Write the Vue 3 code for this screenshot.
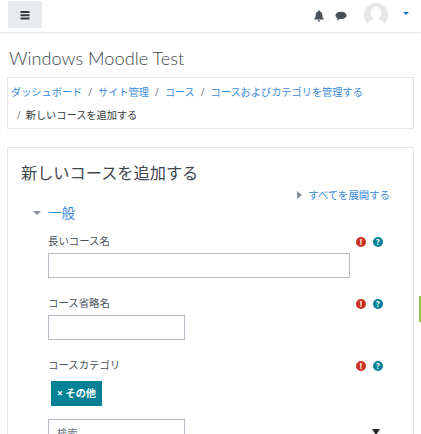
<script setup>
const fields = [
  { label: '長いコース名', size: 'long' },
  { label: 'コース省略名', size: 'short' },
]
const crumbs = ['ダッシュボード', 'サイト管理', 'コース', 'コースおよびカテゴリを管理する']
</script>

<template>
  <div class="page">
    <header class="nav">
      <button class="menu" aria-label="menu">
        <svg width="12" height="10" viewBox="0 0 12 10"><path d="M1.500 1h9v2h-9zM1.500 4.200h9v2h-9zM1.500 7.400h9v2h-9z" fill="#343a40"/></svg>
      </button>
      <div class="nav-right">
        <svg class="bell" width="10" height="12" viewBox="0 0 10 12"><path d="M5 .5c.6 0 1 .4 1 .9 1.500.4 2.300 1.700 2.300 3.300 0 2.300.5 3.200 1.400 4v.8H.3v-.8c.9-.8 1.400-1.700 1.400-4C1.700 3.100 2.500 1.800 4 1.400c0-.5.4-.9 1-.9zM3.700 10.300h2.600c0 .8-.6 1.300-1.300 1.300s-1.300-.5-1.300-1.300z" fill="#495057"/></svg>
        <svg class="chat" width="12" height="10" viewBox="0 0 12 10"><path d="M6 .8c3 0 5.500 1.600 5.500 3.600S9 8 6 8c-.5 0-1 0-1.400-.1C3.700 8.700 2.600 9.300 1.300 9.400c.7-.7 1.200-1.500 1.400-2.200C1.300 6.600.5 5.600.5 4.400.5 2.400 3 .8 6 .8z" fill="#495057"/></svg>
        <svg class="avatar" width="24" height="24" viewBox="0 0 24 24"><defs><clipPath id="c"><circle cx="12" cy="12" r="12"/></clipPath></defs><circle cx="12" cy="12" r="12" fill="#e6e6e6"/><g clip-path="url(#c)" fill="#fff"><ellipse cx="12" cy="10" rx="5.500" ry="6.500"/><path d="M2 26c0-6 4-9 7.500-10h5C18 17 22 20 22 26z"/></g></svg>
        <span class="caret"></span>
      </div>
    </header>

    <main class="content">
      <h1 class="site">Windows Moodle Test</h1>

      <nav class="crumbs">
        <div class="crumb-line">
          <template v-for="(c, i) in crumbs" :key="c">
            <span v-if="i" class="sep">/</span><a class="link">{{ c }}</a>
          </template>
        </div>
        <div class="crumb-line second">
          <span class="sep first">/</span><span class="current">新しいコースを追加する</span>
        </div>
      </nav>

      <section class="card">
        <h2 class="title">新しいコースを追加する</h2>
        <div class="expand"><span class="tri-right"></span><a class="link">すべてを展開する</a></div>
        <div class="legend"><span class="tri-down"></span><a class="link">一般</a></div>

        <div v-for="f in fields" :key="f.label" class="field">
          <div class="label-row">
            <label>{{ f.label }}</label>
            <span class="icons">
              <span class="ic err">!</span>
              <span class="ic help">?</span>
            </span>
          </div>
          <div class="input" :class="f.size"></div>
        </div>

        <div class="field cat">
          <div class="label-row">
            <label>コースカテゴリ</label>
            <span class="icons">
              <span class="ic err">!</span>
              <span class="ic help">?</span>
            </span>
          </div>
          <span class="tag">× その他</span>
          <div class="search-row">
            <div class="input short search">検索</div>
            <span class="select-caret"></span>
          </div>
        </div>
      </section>
    </main>
    <span class="tab"></span>
  </div>
</template>

<style scoped>
.page {
  position: relative;
  width: 421px;
  height: 434px;
  overflow: hidden;
  background: #fff;
  font-family: "Open Sans", "Noto Sans CJK JP", sans-serif;
  font-size: 10.2px;
  color: #495057;
}
.nav {
  height: 32px;
  box-sizing: border-box;
  display: flex;
  justify-content: space-between;
  padding: 1px 0 0 8px;
  box-shadow: 0 1px 2px rgba(0, 0, 0, .12);
}
.menu {
  width: 34px;
  height: 27px;
  border: 0;
  padding: 0;
  background: #e9ecef;
  display: flex;
  align-items: center;
  justify-content: center;
}
.nav-right {
  display: flex;
  align-items: flex-start;
}
.bell { margin-top: 9px; }
.chat { margin: 10px 0 0 11px; }
.avatar { margin: 2px 0 0 17px; }
.caret {
  margin: 11px 12px 0 15px;
  border: 3px solid transparent;
  border-top: 3px solid #1177d1;
  border-bottom: 0;
}
.content { padding: 0 7px; }
.site {
  margin: 13px 0 0 2px;
  font-family: "Lato", "Open Sans", sans-serif;
  font-weight: 300;
  font-size: 18.200px;
  line-height: 26px;
  color: #3f474e;
}
.crumbs {
  margin-top: 6px;
  height: 52px;
  box-sizing: border-box;
  border: 1px solid #e4e6e9;
  padding: 3px 3px 0;
  width: 407px;
}
.crumb-line { line-height: 23px; height: 23px; white-space: nowrap; }
.link { color: #1177d1; opacity: .85; }
.sep { margin: 0 6px; color: #6c757d; }
.sep.first { margin: 0 5px 0 6px; }
.current { color: #373a3c; }
.card {
  margin-top: 18px;
  border: 1px solid #e8e8e8;
  height: 300px;
  padding: 0 0 0 13px;
  position: relative;
}
.title {
  margin: 12px 0 0;
  font-weight: 400;
  font-size: 16.200px;
  line-height: 26px;
  color: #3f474e;
}
.expand {
  display: flex;
  align-items: center;
  justify-content: flex-end;
  padding-right: 23px;
  line-height: 16px;
  margin-top: 1px;
  font-size: 10.400px;
}
.tri-right {
  border: 4px solid transparent;
  border-left: 5px solid #868e96;
  border-right: 0;
  margin-right: 6px;
}
.legend {
  display: flex;
  align-items: center;
  margin: 0 0 0 12px;
  font-size: 13.500px;
  line-height: 20px;
}
.tri-down {
  border: 4px solid transparent;
  border-top: 4px solid #868e96;
  border-bottom: 0;
  margin-right: 7px;
}
.field {
  margin: 0 0 0 27px;
  padding-right: 30px;
  font-size: 10.400px;
}
.label-row {
  display: flex;
  justify-content: space-between;
  align-items: center;
  height: 20px;
  margin-top: 7px;
}
.field + .field .label-row { margin-top: 14px; }
.icons { display: flex; gap: 7px; margin-top: 4px; }
.ic {
  width: 10px;
  height: 10px;
  border-radius: 50%;
  color: #fff;
  font-size: 8px;
  font-weight: 700;
  line-height: 10px;
  text-align: center;
}
.err { background: #ca3120; }
.help { background: #008196; }
.input {
  box-sizing: border-box;
  margin-top: 3px;
  height: 25px;
  border: 1px solid #b8bac6;
  background: #fff;
}
.long { width: 302px; }
.short { width: 137px; }
.tag {
  display: inline-block;
  margin: 7px 0 0 3px;
  background: #008196;
  color: #fff;
  font-weight: 700;
  font-size: 10.200px;
  line-height: 25px;
  height: 25px;
  padding: 0 0 0 6px;
  width: 45px;
  vertical-align: top;
}
.search-row {
  display: flex;
  justify-content: space-between;
  align-items: flex-start;
}
.search {
  margin-top: 13px;
  padding: 5px 8px;
  color: #6c757d;
  height: 30px;
  line-height: 16px;
  font-size: 10.200px;
}
.select-caret {
  margin: 23px 3px 0 0;
  border: 4px solid transparent;
  border-top: 6px solid #212529;
  border-bottom: 0;
}
.tab {
  position: absolute;
  right: 0;
  top: 296px;
  width: 2px;
  height: 26px;
  background: #8fc642;
}
</style>
